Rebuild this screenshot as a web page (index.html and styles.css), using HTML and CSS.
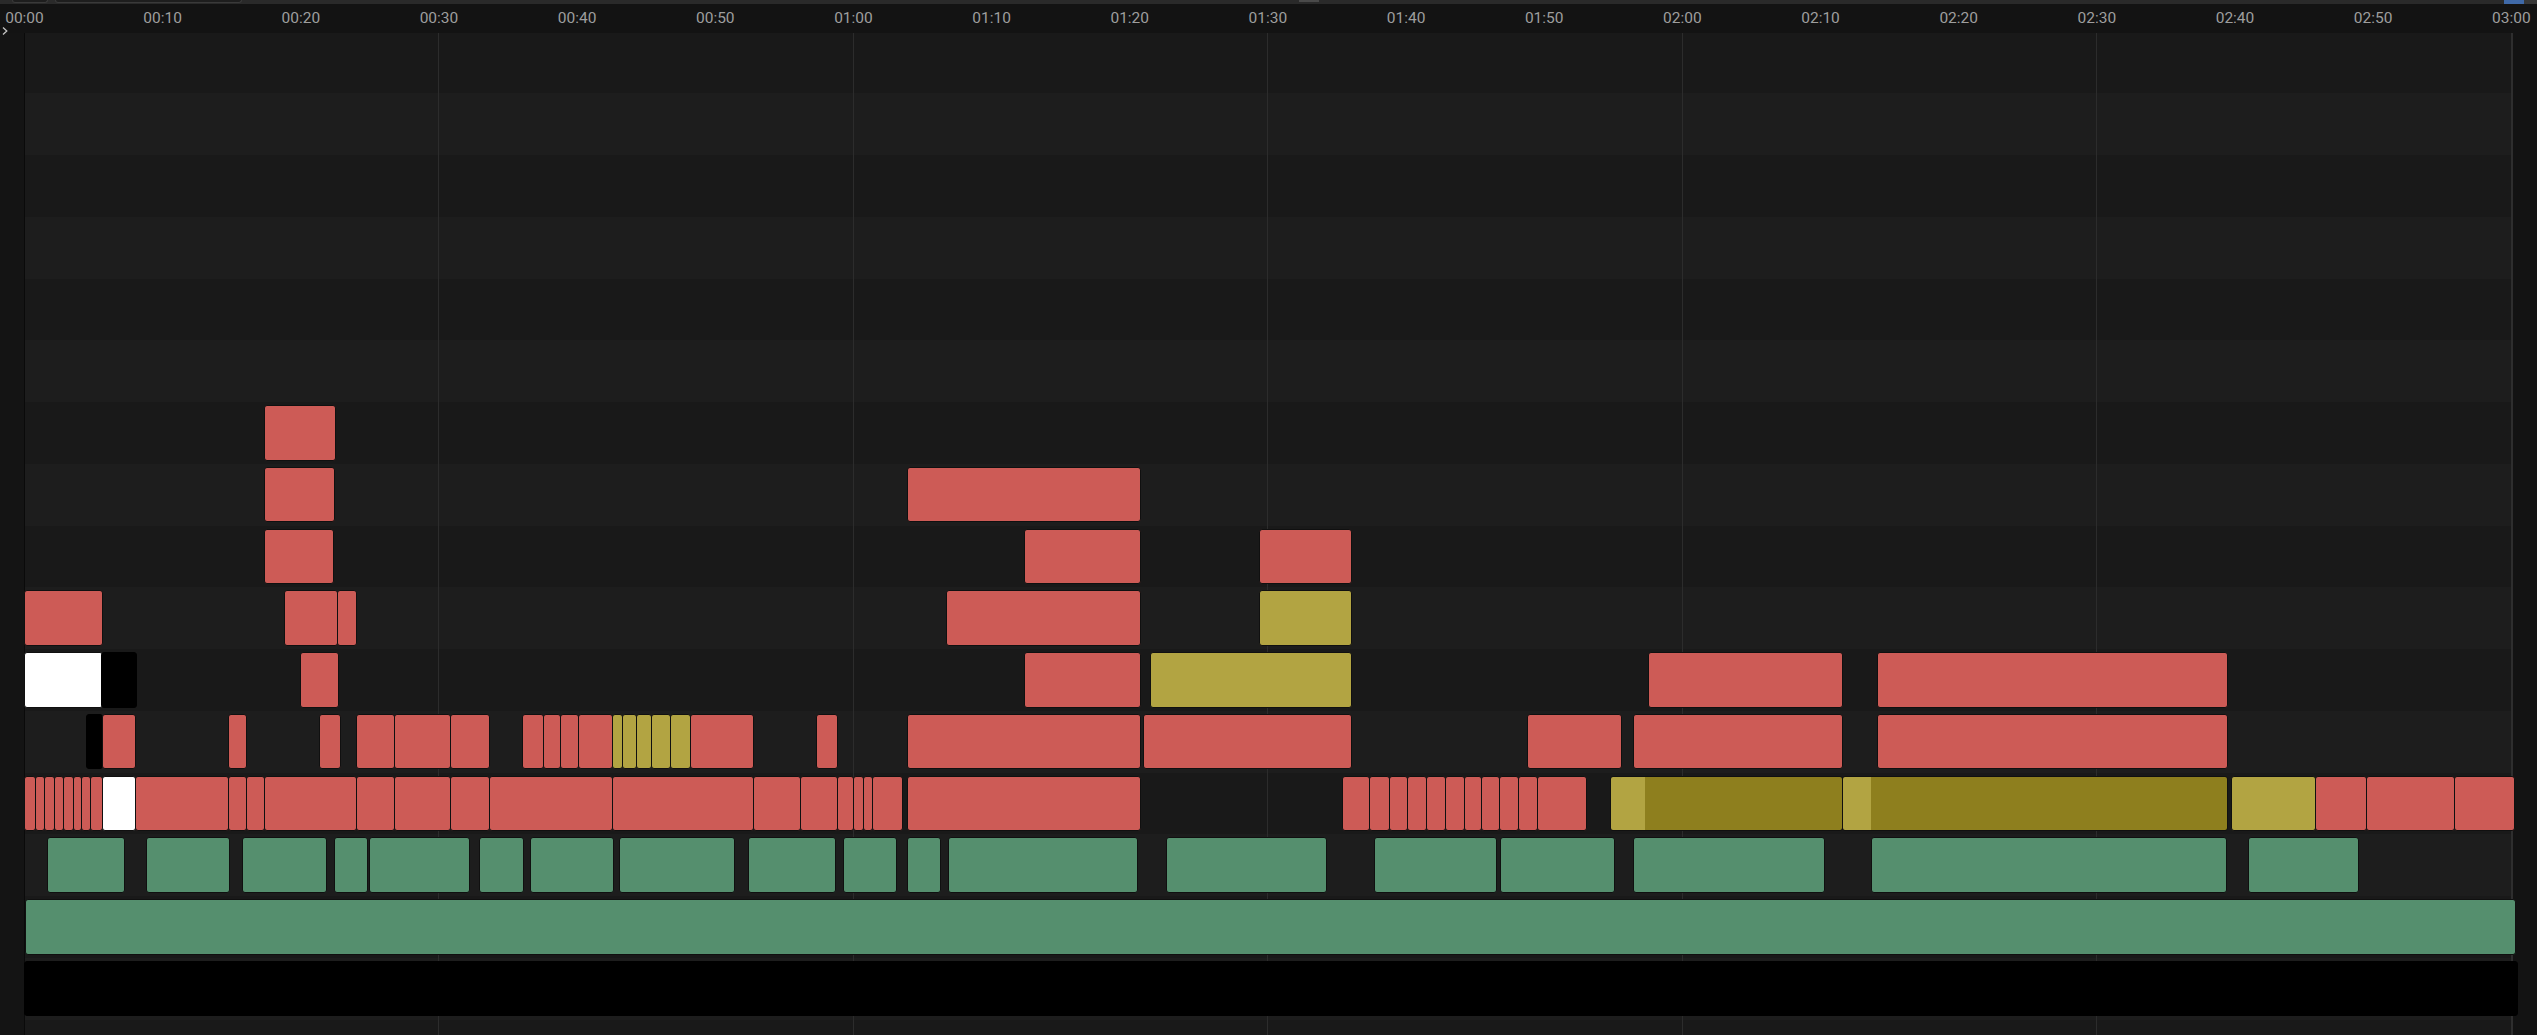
FILE: index.html
```html
<!DOCTYPE html>
<html lang="en">
<head>
<meta charset="utf-8">
<title>Timeline</title>
<link rel="stylesheet" href="styles.css">
</head>
<body>
<div class="app">
  <div class="topbar">
    <span class="tb-btn tb-a"></span>
    <span class="tb-btn tb-b"></span>
    <span class="tb-mark"></span>
    <span class="tb-blue"></span>
    <span class="tb-rest"></span>
  </div>
  <div class="ruler">
    <span class="tick first">00:00</span><span class="tick">00:10</span><span class="tick">00:20</span><span class="tick">00:30</span><span class="tick">00:40</span><span class="tick">00:50</span><span class="tick">01:00</span><span class="tick">01:10</span><span class="tick">01:20</span><span class="tick">01:30</span><span class="tick">01:40</span><span class="tick">01:50</span><span class="tick">02:00</span><span class="tick">02:10</span><span class="tick">02:20</span><span class="tick">02:30</span><span class="tick">02:40</span><span class="tick">02:50</span><span class="tick">03:00</span>
  </div>
  <svg class="chev" width="8" height="10" viewBox="0 0 8 10"><path d="M2 1.5 L5.8 5 L2 8.5" fill="none" stroke="#c4c4c4" stroke-width="1.3"/></svg>
  <div class="main">
    <div class="gutter-l"></div>
    <div class="tracks">
      <div class="row"></div>
      <div class="row"></div>
      <div class="row"></div>
      <div class="row"></div>
      <div class="row"></div>
      <div class="row"></div>
      <div class="row">
        <div class="clip r" style="left:239px;width:72px"></div>
      </div>
      <div class="row">
        <div class="clip r" style="left:239px;width:71px"></div>
        <div class="clip r" style="left:882px;width:234px"></div>
      </div>
      <div class="row">
        <div class="clip r" style="left:239px;width:70px"></div>
        <div class="clip r" style="left:999px;width:117px"></div>
        <div class="clip r" style="left:1234px;width:93px"></div>
      </div>
      <div class="row">
        <div class="clip r" style="left:-1px;width:79px"></div>
        <div class="clip r" style="left:259px;width:54px"></div>
        <div class="clip r" style="left:312px;width:20px"></div>
        <div class="clip r" style="left:921px;width:195px"></div>
        <div class="clip y" style="left:1234px;width:93px"></div>
      </div>
      <div class="row">
        <div class="clip w" style="left:-1px;width:79px"></div>
        <div class="clip k" style="left:76px;width:36px"></div>
        <div class="clip r" style="left:275px;width:39px"></div>
        <div class="clip r" style="left:999px;width:117px"></div>
        <div class="clip y" style="left:1125px;width:202px"></div>
        <div class="clip r" style="left:1623px;width:195px"></div>
        <div class="clip r" style="left:1852px;width:351px"></div>
      </div>
      <div class="row">
        <div class="clip k" style="left:61px;width:17px"></div>
        <div class="clip r" style="left:77px;width:34px"></div>
        <div class="clip r" style="left:203px;width:19px"></div>
        <div class="clip r" style="left:294px;width:22px"></div>
        <div class="clip r" style="left:331px;width:39px"></div>
        <div class="clip r" style="left:369px;width:57px"></div>
        <div class="clip r" style="left:425px;width:40px"></div>
        <div class="clip r" style="left:497px;width:22px"></div>
        <div class="clip r" style="left:518px;width:18px"></div>
        <div class="clip r" style="left:535px;width:19px"></div>
        <div class="clip r" style="left:553px;width:35px"></div>
        <div class="clip y" style="left:587px;width:11px"></div>
        <div class="clip y" style="left:597px;width:15px"></div>
        <div class="clip y" style="left:611px;width:16px"></div>
        <div class="clip y" style="left:626px;width:20px"></div>
        <div class="clip y" style="left:645px;width:21px"></div>
        <div class="clip r" style="left:665px;width:64px"></div>
        <div class="clip r" style="left:791px;width:22px"></div>
        <div class="clip r" style="left:882px;width:234px"></div>
        <div class="clip r" style="left:1118px;width:209px"></div>
        <div class="clip r" style="left:1502px;width:95px"></div>
        <div class="clip r" style="left:1608px;width:210px"></div>
        <div class="clip r" style="left:1852px;width:351px"></div>
      </div>
      <div class="row">
        <div class="clip r" style="left:-1px;width:12px"></div>
        <div class="clip r" style="left:10px;width:10px"></div>
        <div class="clip r" style="left:19px;width:11px"></div>
        <div class="clip r" style="left:29px;width:10px"></div>
        <div class="clip r" style="left:38px;width:11px"></div>
        <div class="clip r" style="left:48px;width:9px"></div>
        <div class="clip r" style="left:56px;width:10px"></div>
        <div class="clip r" style="left:65px;width:13px"></div>
        <div class="clip w" style="left:77px;width:34px"></div>
        <div class="clip r" style="left:110px;width:94px"></div>
        <div class="clip r" style="left:203px;width:19px"></div>
        <div class="clip r" style="left:221px;width:19px"></div>
        <div class="clip r" style="left:239px;width:93px"></div>
        <div class="clip r" style="left:331px;width:39px"></div>
        <div class="clip r" style="left:369px;width:57px"></div>
        <div class="clip r" style="left:425px;width:40px"></div>
        <div class="clip r" style="left:464px;width:124px"></div>
        <div class="clip r" style="left:587px;width:142px"></div>
        <div class="clip r" style="left:728px;width:48px"></div>
        <div class="clip r" style="left:775px;width:38px"></div>
        <div class="clip r" style="left:812px;width:17px"></div>
        <div class="clip r" style="left:828px;width:11px"></div>
        <div class="clip r" style="left:838px;width:10px"></div>
        <div class="clip r" style="left:847px;width:31px"></div>
        <div class="clip r" style="left:882px;width:234px"></div>
        <div class="clip r" style="left:1317px;width:28px"></div>
        <div class="clip r" style="left:1344px;width:21px"></div>
        <div class="clip r" style="left:1364px;width:19px"></div>
        <div class="clip r" style="left:1382px;width:20px"></div>
        <div class="clip r" style="left:1401px;width:20px"></div>
        <div class="clip r" style="left:1420px;width:20px"></div>
        <div class="clip r" style="left:1439px;width:18px"></div>
        <div class="clip r" style="left:1456px;width:19px"></div>
        <div class="clip r" style="left:1474px;width:20px"></div>
        <div class="clip r" style="left:1493px;width:20px"></div>
        <div class="clip r" style="left:1512px;width:50px"></div>
        <div class="clip ys" style="left:1585px;width:233px;--lt:34px"></div>
        <div class="clip ys" style="left:1817px;width:386px;--lt:28px"></div>
        <div class="clip y" style="left:2206px;width:85px"></div>
        <div class="clip r" style="left:2290px;width:52px"></div>
        <div class="clip r" style="left:2341px;width:89px"></div>
        <div class="clip r" style="left:2429px;width:61px"></div>
      </div>
      <div class="row">
        <div class="clip g" style="left:22px;width:78px"></div>
        <div class="clip g" style="left:121px;width:84px"></div>
        <div class="clip g" style="left:217px;width:85px"></div>
        <div class="clip g" style="left:309px;width:34px"></div>
        <div class="clip g" style="left:344px;width:101px"></div>
        <div class="clip g" style="left:454px;width:45px"></div>
        <div class="clip g" style="left:505px;width:84px"></div>
        <div class="clip g" style="left:594px;width:116px"></div>
        <div class="clip g" style="left:723px;width:88px"></div>
        <div class="clip g" style="left:818px;width:54px"></div>
        <div class="clip g" style="left:882px;width:34px"></div>
        <div class="clip g" style="left:923px;width:190px"></div>
        <div class="clip g" style="left:1141px;width:161px"></div>
        <div class="clip g" style="left:1349px;width:123px"></div>
        <div class="clip g" style="left:1475px;width:115px"></div>
        <div class="clip g" style="left:1608px;width:192px"></div>
        <div class="clip g" style="left:1846px;width:356px"></div>
        <div class="clip g" style="left:2223px;width:111px"></div>
      </div>
      <div class="row">
        <div class="clip g" style="left:0px;width:2491px"></div>
      </div>
      <div class="row">
        <div class="clip k" style="left:-1px;width:2494px"></div>
      </div>
      <div class="row"></div>
    </div>
    <div class="gutter-r"></div>
  </div>
</div>
</body>
</html>
```
FILE: styles.css
```css
* { box-sizing: border-box; }

html, body {
  margin: 0;
  padding: 0;
  background: #191919;
  overflow: hidden;
}

.app {
  position: relative;
  width: 2537px;
  height: 1035px;
  overflow: hidden;
  font-family: Roboto, "Liberation Sans", sans-serif;
}

/* top strip */
.topbar {
  display: flex;
  height: 4px;
  background: #2a2a2a;
  overflow: hidden;
}
.tb-btn {
  flex: 0 0 auto;
  height: 3px;
  background: #1e1e1e;
  border: 1px solid #3a3a3a;
  border-top: none;
  border-radius: 0 0 3px 3px;
}
.tb-a { margin-left: 12px; width: 36px; }
.tb-b { margin-left: 7px; width: 187px; }
.tb-mark {
  flex: 0 0 20px;
  margin-left: 1057px;
  height: 2px;
  background: #4a4a4a;
}
.tb-blue {
  flex: 0 0 20px;
  margin-left: 1185px;
  height: 4px;
  background: #3f69a8;
}
.tb-rest {
  flex: 1 1 auto;
  background: #383838;
}

/* time ruler */
.ruler {
  display: flex;
  height: 28.5px;
  background: #131313;
  overflow: hidden;
  white-space: nowrap;
}
.tick {
  flex: 0 0 138.16px;
  text-align: center;
  color: #9e9e9e;
  font-size: 15.5px;
  line-height: 27.5px;
  padding-top: 1px;
}
.tick.first { margin-left: -44.58px; }

.chev {
  position: absolute;
  left: 1px;
  top: 26px;
}

/* track area */
.main {
  display: flex;
  height: 1002.5px;
  overflow: hidden;
}
.gutter-l {
  flex: 0 0 25px;
  background: #141414;
  border-right: 1px solid #0a0a0a;
}
.gutter-r {
  flex: 0 0 26px;
  background: #131313;
  border-left: 2px solid #2e2e2e;
}
.tracks {
  flex: 1 1 auto;
  position: relative;
}

.row {
  position: relative;
  height: 61.75px;
  background-color: #191919;
  background-image: repeating-linear-gradient(90deg, transparent 0, transparent 413.5px, #2c2c2c 413.5px, #2c2c2c 414.48px);
}
.row:first-child { height: 60.75px; }
.row:nth-child(even) { background-color: #1d1d1d; }

.clip {
  position: absolute;
  top: 3px;
  height: 55.5px;
  border: 1px solid #101010;
  border-radius: 3px;
}
.r { background: #cd5b56; }
.g { background: #558f6e; }
.y { background: #b2a442; }
.w { background: #ffffff; }
.k { background: #000000; border-color: #000; }
.ys {
  background: linear-gradient(90deg, #b2a442 0, #b2a442 var(--lt), #8e7f1e var(--lt), #8e7f1e 100%);
}
```
